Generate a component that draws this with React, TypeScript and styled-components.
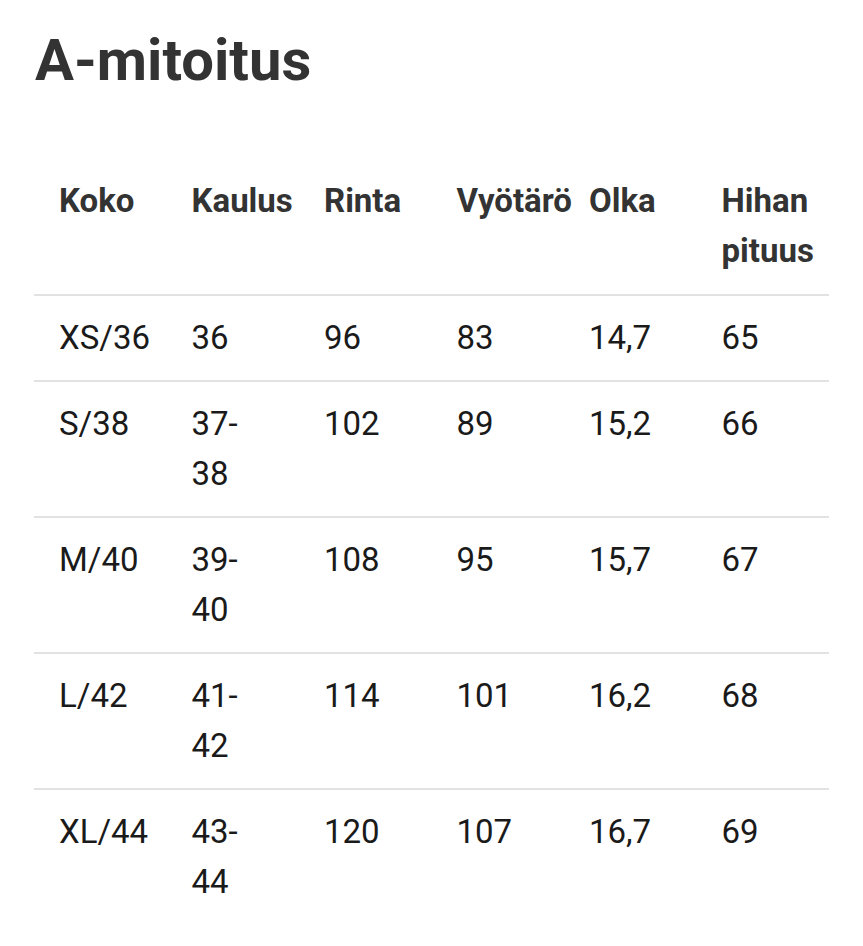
import { createGlobalStyle, styled } from 'styled-components';

const SIZES = [
  { size: 'XS/36', neck: '36', chest: '96', waist: '83', shoulder: '14,7', sleeve: '65' },
  { size: 'S/38', neck: '37-38', chest: '102', waist: '89', shoulder: '15,2', sleeve: '66' },
  { size: 'M/40', neck: '39-40', chest: '108', waist: '95', shoulder: '15,7', sleeve: '67' },
  { size: 'L/42', neck: '41-42', chest: '114', waist: '101', shoulder: '16,2', sleeve: '68' },
  { size: 'XL/44', neck: '43-44', chest: '120', waist: '107', shoulder: '16,7', sleeve: '69' },
];

const HEADERS = ['Koko', 'Kaulus', 'Rinta', 'Vyötärö', 'Olka', 'Hihan pituus'];

const App = () => {
  return (
    <Base>
      <GlobalStyle />
      <Title>A-mitoitus</Title>
      <SizeTable>
        <thead>
          <tr>
            {HEADERS.map((h) => (
              <HeadCell key={h}>{h}</HeadCell>
            ))}
          </tr>
        </thead>
        <tbody>
          {SIZES.map((row) => (
            <tr key={row.size}>
              <Cell>{row.size}</Cell>
              <Cell>{row.neck}</Cell>
              <Cell>{row.chest}</Cell>
              <Cell>{row.waist}</Cell>
              <Cell>{row.shoulder}</Cell>
              <Cell>{row.sleeve}</Cell>
            </tr>
          ))}
        </tbody>
      </SizeTable>
    </Base>
  );
};

export default App;

const GlobalStyle = createGlobalStyle`
  body {
    margin: 0;
    background: #fff;
    font-family: Roboto, 'Noto Sans', sans-serif;
  }
`;

const Base = styled.div`
  padding: 25px 34px 0;
`;

const Title = styled.h1`
  margin: 0 0 63px 1px;
  font-size: 58px;
  line-height: 70px;
  font-weight: 700;
  color: #333;
`;

const SizeTable = styled.table`
  width: 100%;
  table-layout: fixed;
  border-collapse: collapse;
`;

const HeadCell = styled.th`
  padding: 18px 26px 18px 25px;
  text-align: left;
  vertical-align: top;
  font-size: 33px;
  line-height: 50px;
  font-weight: 700;
  color: #333;
`;

const Cell = styled.td`
  padding: 17px 26px 17px 25px;
  border-top: 2px solid #e2e2e2;
  vertical-align: top;
  font-size: 33px;
  line-height: 50px;
  color: #1a1a1a;
`;
